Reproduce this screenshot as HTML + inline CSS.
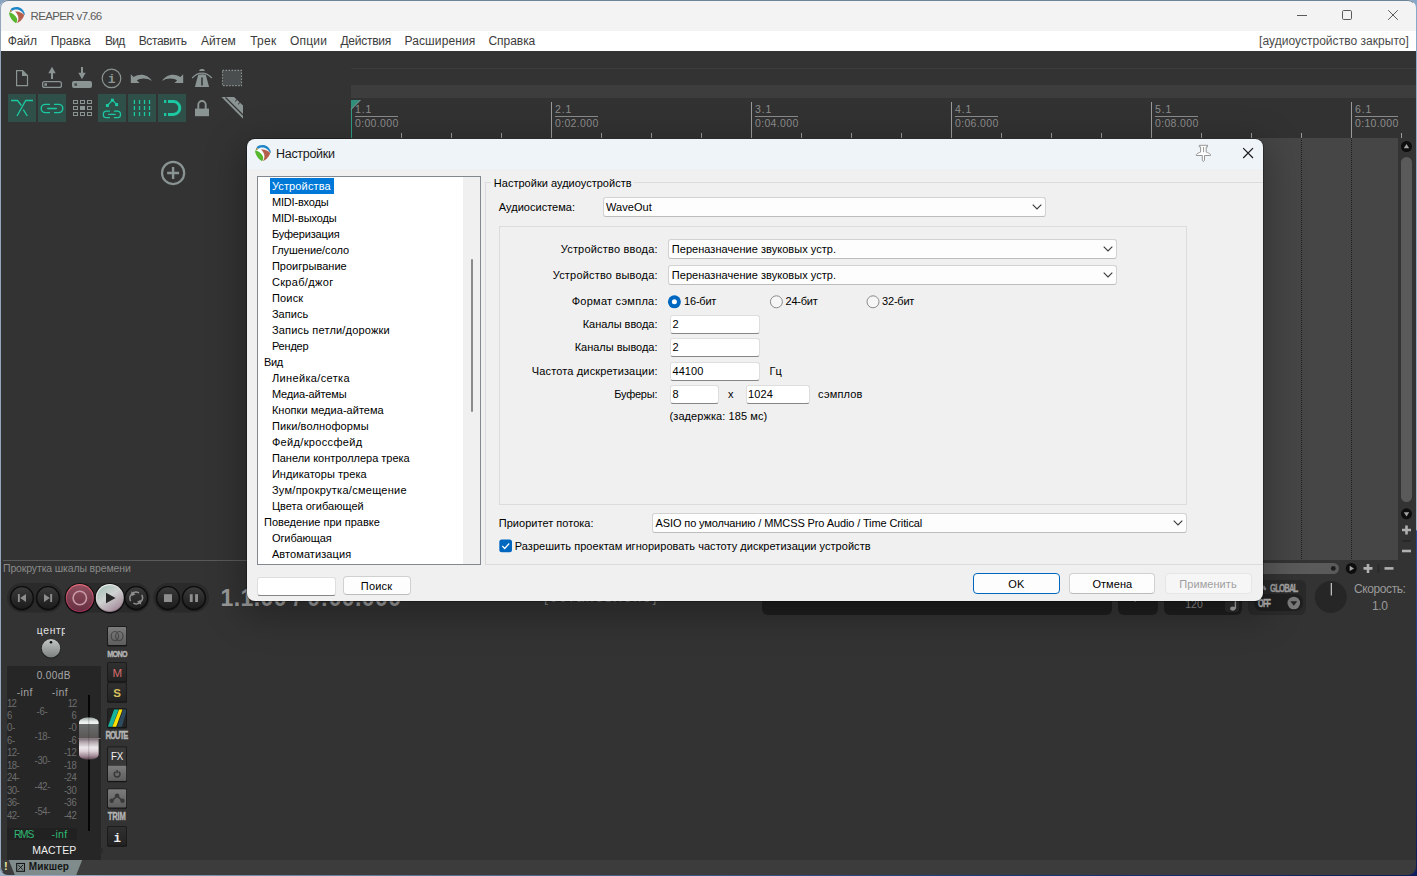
<!DOCTYPE html>
<html lang="ru"><head><meta charset="utf-8"><title>REAPER v7.66</title>
<style>
html,body{margin:0;padding:0;}
body{width:1417px;height:876px;overflow:hidden;position:relative;background:linear-gradient(90deg,#9fb0c4 0,#5c7290 30%,#1c3a78 75%,#0c1c58 100%);
 font-family:"Liberation Sans",sans-serif;}
.b{position:absolute;box-sizing:border-box;}
.t{position:absolute;white-space:nowrap;line-height:1;display:block;}
svg{position:absolute;overflow:visible;}
#win{position:absolute;left:0;top:0;width:1416px;height:876px;border-radius:8px;overflow:hidden;
 background:#333333;border:1px solid #6c8197;box-sizing:border-box;}
#dlg{position:absolute;left:247px;top:139px;width:1016px;height:461.5px;border-radius:8px;
 background:#f0f0f0;overflow:hidden;}
#dlgsh{position:absolute;left:247px;top:139px;width:1016px;height:461.5px;border-radius:8px;
 box-shadow:0 10px 36px 6px rgba(0,0,0,.27),0 0 0 1px rgba(0,0,0,.3);}
.edit{background:#fff;border:1px solid #dedede;border-bottom:1px solid #868686;border-radius:3px;}
.combo{background:#fdfdfd;border:1px solid #d2d2d2;border-bottom-color:#bdbdbd;border-radius:3px;}
.btn{background:#fdfdfd;border:1px solid #d0d0d0;border-bottom-color:#bcbcbc;border-radius:4px;}
.grp{border:1px solid #dcdcdc;}
#frame{position:absolute;left:0;top:0;width:1416px;height:875px;box-sizing:border-box;border-radius:8px;
 border:1px solid rgba(70,95,125,.0);border-top-color:#6e8499;border-left-color:#93a6ba;
 pointer-events:none;}

</style></head>
<body>
<div class="b " style="left:0px;top:0px;width:1416px;height:875px;background:#333333;"></div><div class="b " style="left:0px;top:0px;width:1416px;height:31px;background:#f3f3f3;"></div><div class="b " style="left:0px;top:31px;width:1416px;height:20px;background:#ffffff;"></div><svg style="left:9px;top:6.8px" width="16.4" height="16.4" viewBox="0 -0.400 16.400 16.400"><path d="M1.500 1.900C3.500-.3 7-1 9.800-.1 13 .9 15.400 3.800 16.100 7.700l-1.300-.9C13.600 4.800 11.800 3 9.300 2.400 7 1.900 4.800 2.300 3.300 3.400z" fill="#1e86c8"/><path d="M2.300 3.800C4.600 3.200 6.600 4.600 8 6.800c1.400 2.400 1.800 5.800-.1 9H7L.8 4.900z" fill="#ffffff"/><path d="M.1 4.900C2.500 5.200 6.300 7.600 7.800 10.800c.8 1.800.4 3.800-.8 5C3.200 13.600 0 9.400.1 4.900z" fill="#57b82f"/><path d="M6 4.200c3-.6 7 .8 9.200 3.400-.8 3.400-3.800 6.800-7.300 8.200 1.500-2.200 1.900-4.400 1.300-6.600C8.600 7.200 7.400 5.400 6 4.200z" fill="#b5604c"/><path d="M1.400 2.300l1.500.9-.5 1.300-1.500-.2z" fill="#8f7a2c"/></svg><span class="t" style="top:11.00px;font-size:11.5px;color:#5c5c5c;letter-spacing:-0.620px;left:30.48px;">REAPER v7.66</span><svg style="left:1290px;top:5px" width="120" height="22" viewBox="0 0 120 22" fill="none" stroke="#5a5a5a" stroke-width="1"><path d="M7 10.500h10"/><rect x="52.500" y="5.500" width="9" height="9" rx="1.200"/><path d="M98.200 5.200l9.600 9.600M107.800 5.200l-9.600 9.600"/></svg><span class="t" style="top:35.00px;font-size:12px;color:#3b3b3b;letter-spacing:-0.059px;left:7.66px;">Файл</span><span class="t" style="top:35.00px;font-size:12px;color:#3b3b3b;letter-spacing:-0.081px;left:50.66px;">Правка</span><span class="t" style="top:35.00px;font-size:12px;color:#3b3b3b;letter-spacing:-0.689px;left:104.96px;">Вид</span><span class="t" style="top:35.00px;font-size:12px;color:#3b3b3b;letter-spacing:-0.362px;left:138.66px;">Вставить</span><span class="t" style="top:35.00px;font-size:12px;color:#3b3b3b;letter-spacing:-0.040px;left:200.96px;">Айтем</span><span class="t" style="top:35.00px;font-size:12px;color:#3b3b3b;letter-spacing:0.291px;left:250.16px;">Трек</span><span class="t" style="top:35.00px;font-size:12px;color:#3b3b3b;letter-spacing:0.229px;left:289.96px;">Опции</span><span class="t" style="top:35.00px;font-size:12px;color:#3b3b3b;letter-spacing:-0.248px;left:340.46px;">Действия</span><span class="t" style="top:35.00px;font-size:12px;color:#3b3b3b;letter-spacing:0.116px;left:404.46px;">Расширения</span><span class="t" style="top:35.00px;font-size:12px;color:#3b3b3b;letter-spacing:-0.040px;left:488.46px;">Справка</span><span class="t" style="top:35.00px;font-size:12px;color:#4a4a4a;letter-spacing:0.036px;left:1259.06px;">[аудиоустройство закрыто]</span><div class="b " style="left:351px;top:68px;width:1065px;height:1px;background:#3b3b3b;"></div><div class="b " style="left:351px;top:85px;width:1065px;height:13px;background:#3d3d3d;"></div><div class="b " style="left:351px;top:98px;width:1065px;height:40px;background:#323232;"></div><span class="t" style="top:104.00px;font-size:10.5px;color:#8c8c8c;letter-spacing:0.813px;left:355.03px;">1.1</span><div class="b " style="left:355px;top:116px;width:43px;height:1px;background:#8a8a8a;"></div><span class="t" style="top:118.00px;font-size:10.5px;color:#8c8c8c;letter-spacing:0.337px;left:355.03px;">0:00.000</span><div class="b " style="left:401px;top:133px;width:1px;height:5px;background:#9a9a9a;"></div><div class="b " style="left:451px;top:133px;width:1px;height:5px;background:#9a9a9a;"></div><div class="b " style="left:501px;top:133px;width:1px;height:5px;background:#9a9a9a;"></div><div class="b " style="left:551px;top:102px;width:1px;height:36px;background:#9a9a9a;"></div><span class="t" style="top:104.00px;font-size:10.5px;color:#8c8c8c;letter-spacing:0.813px;left:555.03px;">2.1</span><div class="b " style="left:555px;top:116px;width:43px;height:1px;background:#8a8a8a;"></div><span class="t" style="top:118.00px;font-size:10.5px;color:#8c8c8c;letter-spacing:0.337px;left:555.03px;">0:02.000</span><div class="b " style="left:601px;top:133px;width:1px;height:5px;background:#9a9a9a;"></div><div class="b " style="left:651px;top:133px;width:1px;height:5px;background:#9a9a9a;"></div><div class="b " style="left:701px;top:133px;width:1px;height:5px;background:#9a9a9a;"></div><div class="b " style="left:751px;top:102px;width:1px;height:36px;background:#9a9a9a;"></div><span class="t" style="top:104.00px;font-size:10.5px;color:#8c8c8c;letter-spacing:0.813px;left:755.03px;">3.1</span><div class="b " style="left:755px;top:116px;width:43px;height:1px;background:#8a8a8a;"></div><span class="t" style="top:118.00px;font-size:10.5px;color:#8c8c8c;letter-spacing:0.337px;left:755.03px;">0:04.000</span><div class="b " style="left:801px;top:133px;width:1px;height:5px;background:#9a9a9a;"></div><div class="b " style="left:851px;top:133px;width:1px;height:5px;background:#9a9a9a;"></div><div class="b " style="left:901px;top:133px;width:1px;height:5px;background:#9a9a9a;"></div><div class="b " style="left:951px;top:102px;width:1px;height:36px;background:#9a9a9a;"></div><span class="t" style="top:104.00px;font-size:10.5px;color:#8c8c8c;letter-spacing:0.813px;left:955.03px;">4.1</span><div class="b " style="left:955px;top:116px;width:43px;height:1px;background:#8a8a8a;"></div><span class="t" style="top:118.00px;font-size:10.5px;color:#8c8c8c;letter-spacing:0.337px;left:955.03px;">0:06.000</span><div class="b " style="left:1001px;top:133px;width:1px;height:5px;background:#9a9a9a;"></div><div class="b " style="left:1051px;top:133px;width:1px;height:5px;background:#9a9a9a;"></div><div class="b " style="left:1101px;top:133px;width:1px;height:5px;background:#9a9a9a;"></div><div class="b " style="left:1151px;top:102px;width:1px;height:36px;background:#9a9a9a;"></div><span class="t" style="top:104.00px;font-size:10.5px;color:#8c8c8c;letter-spacing:0.813px;left:1155.03px;">5.1</span><div class="b " style="left:1155px;top:116px;width:43px;height:1px;background:#8a8a8a;"></div><span class="t" style="top:118.00px;font-size:10.5px;color:#8c8c8c;letter-spacing:0.337px;left:1155.03px;">0:08.000</span><div class="b " style="left:1201px;top:133px;width:1px;height:5px;background:#9a9a9a;"></div><div class="b " style="left:1251px;top:133px;width:1px;height:5px;background:#9a9a9a;"></div><div class="b " style="left:1301px;top:133px;width:1px;height:5px;background:#9a9a9a;"></div><div class="b " style="left:1351px;top:102px;width:1px;height:36px;background:#9a9a9a;"></div><span class="t" style="top:104.00px;font-size:10.5px;color:#8c8c8c;letter-spacing:0.813px;left:1355.03px;">6.1</span><div class="b " style="left:1355px;top:116px;width:43px;height:1px;background:#8a8a8a;"></div><span class="t" style="top:118.00px;font-size:10.5px;color:#8c8c8c;letter-spacing:0.337px;left:1355.03px;">0:10.000</span><div class="b " style="left:1401px;top:133px;width:1px;height:5px;background:#9a9a9a;"></div><div class="b " style="left:351px;top:100px;width:1px;height:38px;background:#2f9c86;"></div><svg style="left:351px;top:100px" width="10" height="10" viewBox="0 0 10 10"><path d="M0 0h9.500L0 9.500z" fill="#2f8f7a"/><path d="M9.500 0L0 9.500" stroke="#8d9a97" stroke-width="1"/></svg><div class="b " style="left:351px;top:138px;width:1047px;height:422px;background:#464646;"></div><div class="b" style="left:1301px;top:138px;width:1px;height:422px;background:repeating-linear-gradient(#1f1f1f 0 1px,transparent 1px 2px)"></div><div class="b" style="left:1351px;top:138px;width:1px;height:422px;background:repeating-linear-gradient(#1f1f1f 0 1px,transparent 1px 2px)"></div><div class="b " style="left:1398px;top:138px;width:18px;height:440px;background:#333333;"></div><div class="b " style="left:1401px;top:157px;width:11px;height:345px;background:#5a5a5a;border-radius:5.500px;"></div><svg style="left:1398px;top:138px" width="18" height="430" viewBox="0 0 18 430"><circle cx="8.500" cy="8.500" r="5.500" fill="#0d0d0d"/><path d="M5.800 10.300h5.400L8.500 6z" fill="#a4a4a4"/><circle cx="8.500" cy="375.800" r="5.500" fill="#0d0d0d"/><path d="M5.800 374.200h5.400L8.500 378.500z" fill="#a4a4a4"/><path d="M4 392h9M8.500 387.500v9" stroke="#b0b0b0" stroke-width="2.600"/><path d="M4.500 403h8" stroke="#282828" stroke-width="1.800"/><path d="M4 413h9" stroke="#b0b0b0" stroke-width="2.600"/></svg><div class="b " style="left:351px;top:560px;width:1047px;height:18px;background:#333333;"></div><div class="b " style="left:360px;top:563px;width:979px;height:11px;background:#5a5a5a;border-radius:5.500px;"></div><svg style="left:1320px;top:560px" width="80" height="18" viewBox="0 0 80 18"><circle cx="13.300" cy="8.400" r="2.400" fill="#1c1c1c"/><circle cx="31.300" cy="8.400" r="5.500" fill="#0d0d0d"/><path d="M29.700 5.700v5.400L34 8.400z" fill="#a4a4a4"/><path d="M43.500 8.400h9M48 3.900v9" stroke="#b0b0b0" stroke-width="2.600"/><path d="M58.500 4.500v8" stroke="#282828" stroke-width="1.800"/><path d="M64.500 8.400h9" stroke="#b0b0b0" stroke-width="2.600"/></svg><svg style="left:160px;top:160px" width="26" height="26" viewBox="0 0 26 26" fill="none" stroke="#8a9393"><circle cx="13.100" cy="12.950" r="11.100" stroke-width="2.200"/><path d="M7.100 12.950h12M13.100 6.950v12" stroke-width="2.400"/></svg><div class="b " style="left:8px;top:94px;width:28px;height:28px;background:#2e5048;"></div><div class="b " style="left:38px;top:94px;width:28px;height:28px;background:#2e5048;"></div><div class="b " style="left:98px;top:94px;width:28px;height:28px;background:#2e5048;"></div><div class="b " style="left:128px;top:94px;width:28px;height:28px;background:#2e5048;"></div><div class="b " style="left:158px;top:94px;width:28px;height:28px;background:#2e5048;"></div><svg style="left:0px;top:60px" width="250" height="66" viewBox="0 60 250 66"><path d="M16.600 70.600h6l4.900 4.900v10.100h-10.900z" fill="none" stroke="#8a9492" stroke-width="1.200"/><path d="M22 70.200l5.900 5.900h-5.900z" fill="#8a9492"/><path d="M52 66.800l3.700 6.500h-2.700v5.700h-2v-5.700h-2.700z" fill="#8a9492"/><rect x="42.600" y="81.600" width="18.800" height="5.800" rx="2" fill="none" stroke="#8a9492" stroke-width="1.300"/><rect x="44.400" y="83.300" width="2.600" height="2.500" fill="#8a9492"/><path d="M81 67h2v5.800h2.700L82 79.300l-3.700-6.500H81z" fill="#8a9492"/><rect x="72" y="81" width="20" height="7" rx="2" fill="#8a9492"/><rect x="74.400" y="83.300" width="2.600" height="2.500" fill="#454a49"/><circle cx="111.500" cy="78.400" r="9.300" fill="none" stroke="#8a9492" stroke-width="1.200"/><text x="111.700" y="83.200" font-family="Liberation Mono,monospace" font-weight="700" font-size="13" text-anchor="middle" fill="#8a9492">i</text><path d="M130.800 74.300v8.700h8.800l-2.700-2.600c3.800-2.600 9.700-2.700 14.900.5-2.800-5-10.600-8.600-18.200-3.900z" fill="#8a9492"/><path d="M183.200 74.300v8.700h-8.800l2.700-2.600c-3.800-2.600-9.700-2.700-14.900.5 2.800-5 10.600-8.600 18.200-3.900z" fill="#8a9492"/><path d="M199.600 69.700c.6-1.100 4.200-1.100 4.800 0l.4 1.300h-5.600z" fill="#8a9492"/><path d="M192.200 78c5.600-6.600 14-6.600 19.600 0" fill="none" stroke="#8a9492" stroke-width="1.200"/><path d="M198.200 74.800c2.400-.8 5.200-.8 7.600 0l3.300 12.200h-14.200z" fill="#8a9492"/><path d="M201.300 77.500h1.400v8h-1.400z" fill="#2a2a2a"/><rect x="222.500" y="70.400" width="19" height="15.200" fill="#4a4e4e" stroke="#8a9492" stroke-width="1.100" stroke-dasharray="1.600 1.400"/><path d="M11 100.500h6.600l3.700 5M23.300 109.600l4 6.400M33 100.500h-7.300l-8.700 15.500" fill="none" stroke="#1cc8a2" stroke-width="1.300"/><path d="M50.0 104.4H45.3a4.1 4.1 0 0 0 0 8.2H50.0M54.0 104.4H58.7a4.1 4.1 0 0 1 0 8.2H54.0M47.2 108.5H56.8" fill="none" stroke="#1cc8a2" stroke-width="1.4"/><rect x="73.5" y="100.5" width="4" height="3" fill="none" stroke="#8a9492" stroke-width="1"/><rect x="80.5" y="100.5" width="4" height="3" fill="none" stroke="#8a9492" stroke-width="1"/><rect x="87.5" y="100.5" width="4" height="3" fill="none" stroke="#8a9492" stroke-width="1"/><rect x="73.5" y="106.5" width="4" height="3" fill="none" stroke="#8a9492" stroke-width="1"/><rect x="80.0" y="106.0" width="5" height="4" fill="#8a9492"/><rect x="87.5" y="106.5" width="4" height="3" fill="none" stroke="#8a9492" stroke-width="1"/><rect x="73.5" y="112.5" width="4" height="3" fill="none" stroke="#8a9492" stroke-width="1"/><rect x="80.5" y="112.5" width="4" height="3" fill="none" stroke="#8a9492" stroke-width="1"/><rect x="87.5" y="112.5" width="4" height="3" fill="none" stroke="#8a9492" stroke-width="1"/><path d="M107.500 105.500l5-5.300 4.200 4.500" fill="none" stroke="#1cc8a2" stroke-width="1.200"/><rect x="110.900" y="98.700" width="3" height="3" fill="#1cc8a2"/><rect x="105.900" y="104" width="3" height="3" fill="#1cc8a2"/><rect x="115.100" y="103.100" width="3" height="3" fill="#1cc8a2"/><path d="M109.9 111.2H106.5a3.2 3.2 0 0 0 0 6.4H109.9M113.9 111.2H117.3a3.2 3.2 0 0 1 0 6.4H113.9M108.1 114.4H115.7" fill="none" stroke="#1cc8a2" stroke-width="1.3"/><path d="M134.4 100v4M134.4 106v4M134.4 112v4" stroke="#1cc8a2" stroke-width="1.300"/><path d="M139.5 100v4M139.5 106v4M139.5 112v4" stroke="#1cc8a2" stroke-width="1.300"/><path d="M144.5 100v4M144.5 106v4M144.5 112v4" stroke="#1cc8a2" stroke-width="1.300"/><path d="M149.5 100v4M149.5 106v4M149.5 112v4" stroke="#1cc8a2" stroke-width="1.300"/><rect x="164" y="100" width="2.300" height="3" fill="#1cc8a2"/><rect x="164" y="113" width="2.300" height="3" fill="#1cc8a2"/><path d="M168 101.600h5.400a6.400 6.400 0 0 1 0 12.800H168" fill="none" stroke="#1cc8a2" stroke-width="3"/><rect x="195" y="108.600" width="14" height="7.600" fill="#8a9492"/><path d="M198.300 109v-4.300a3.700 3.700 0 0 1 7.400 0v4.300" fill="none" stroke="#8a9492" stroke-width="1.900"/><path d="M221.500 97h12.500l9 8.500v13.300z" fill="#8a9492"/><path d="M225.500 97.500l17.500 17.500" stroke="#333" stroke-width="1.100"/><path d="M235 101.500l3-2.800M238 104.300l2.600-2.400" stroke="#333" stroke-width="1"/></svg><div class="b " style="left:3px;top:560px;width:348px;height:1px;background:#5a5a5a;"></div><span class="t" style="top:563.00px;font-size:10.5px;color:#8a8a8a;letter-spacing:-0.141px;left:3.03px;">Прокрутка шкалы времени</span><svg style="left:0px;top:578px" width="420" height="44" viewBox="0 578 420 44"><defs><linearGradient id="gdk" x1="0" y1="0" x2="0" y2="1"><stop offset="0" stop-color="#3a3a3a"/><stop offset="1" stop-color="#1c1c1c"/></linearGradient><linearGradient id="grec" x1="0" y1="0" x2="0" y2="1"><stop offset="0" stop-color="#e86c7c"/><stop offset=".5" stop-color="#b84c66"/><stop offset="1" stop-color="#a02a5c"/></linearGradient><linearGradient id="gplay" x1="0.15" y1="0" x2="0.85" y2="1"><stop offset="0" stop-color="#a4c0b6"/><stop offset=".45" stop-color="#d0d2d1"/><stop offset="1" stop-color="#a08494"/></linearGradient><linearGradient id="grecf" x1="0" y1="0" x2="0" y2="1"><stop offset="0" stop-color="#905060"/><stop offset="1" stop-color="#683040"/></linearGradient><linearGradient id="gplayr" x1="0.3" y1="0" x2="0.7" y2="1"><stop offset="0" stop-color="#f4f6f5"/><stop offset=".5" stop-color="#c8c8c8"/><stop offset="1" stop-color="#846878"/></linearGradient></defs><rect x="7" y="583" width="55.5" height="29.500" rx="14.700" fill="#2a2a2a"/><rect x="64.5" y="583" width="85.5" height="29.500" rx="14.700" fill="#2a2a2a"/><rect x="153.3" y="583" width="55.69999999999999" height="29.500" rx="14.700" fill="#2a2a2a"/><circle cx="21.9" cy="598.6" r="12.4" fill="#1a1a1a"/><circle cx="21.9" cy="598" r="11.9" fill="#0c0c0c"/><circle cx="21.9" cy="598" r="10.700000000000001" fill="url(#gdk)"/><path d="M17.900 594.100h1.900v7.900h-1.900zM26 594.100v7.900l-5.800-3.950z" fill="#8e8e8e"/><circle cx="48" cy="598.6" r="12.4" fill="#1a1a1a"/><circle cx="48" cy="598" r="11.9" fill="#0c0c0c"/><circle cx="48" cy="598" r="10.700000000000001" fill="url(#gdk)"/><path d="M50.200 594.100h1.900v7.900h-1.900zM44 594.100v7.900l5.800-3.950z" fill="#8e8e8e"/><circle cx="136.2" cy="598.6" r="12.4" fill="#1a1a1a"/><circle cx="136.2" cy="598" r="11.9" fill="#0c0c0c"/><circle cx="136.2" cy="598" r="10.700000000000001" fill="url(#gdk)"/><path d="M130.600 601.200a6.200 6.200 0 0 1 8.400-8.300M141.800 594.800a6.200 6.200 0 0 1-8.400 8.300" fill="none" stroke="#8e8e8e" stroke-width="1.500"/><path d="M131.200 591.200l4.300 3.100-3.900 2zM141.200 604.800l-4.300-3.100 3.900-2z" fill="#8e8e8e"/><circle cx="168" cy="598.6" r="12.4" fill="#1a1a1a"/><circle cx="168" cy="598" r="11.9" fill="#0c0c0c"/><circle cx="168" cy="598" r="10.700000000000001" fill="url(#gdk)"/><rect x="164" y="594.200" width="8" height="7.800" fill="#8e8e8e"/><circle cx="193.9" cy="598.6" r="12.4" fill="#1a1a1a"/><circle cx="193.9" cy="598" r="11.9" fill="#0c0c0c"/><circle cx="193.9" cy="598" r="10.700000000000001" fill="url(#gdk)"/><rect x="189.800" y="594.200" width="2.900" height="7.800" fill="#8e8e8e"/><rect x="195.100" y="594.200" width="2.900" height="7.800" fill="#8e8e8e"/><circle cx="79.800" cy="598.300" r="15.100" fill="#0a0a0a"/><circle cx="79.800" cy="598" r="14" fill="url(#grec)"/><circle cx="79.800" cy="598.100" r="12.900" fill="url(#grecf)"/><circle cx="79.800" cy="598" r="6.700" fill="none" stroke="#c89aa8" stroke-width="1.600"/><circle cx="109.800" cy="598.300" r="15.100" fill="#0a0a0a"/><circle cx="109.800" cy="598" r="14" fill="url(#gplayr)"/><circle cx="109.800" cy="598.100" r="12.900" fill="url(#gplay)"/><path d="M106 592.800v10.400l9.600-5.200z" fill="#262626"/></svg><span class="t" style="top:587.00px;font-size:23px;color:#9a9a9a;font-weight:700;letter-spacing:0.418px;left:220.47px;">1.1.00 / 0:00.000</span><span class="t" style="top:590.00px;font-size:14px;color:#808080;letter-spacing:1.813px;left:543.97px;">[остановлено]</span><div class="b " style="left:762px;top:580px;width:350px;height:35px;background:#1e1e1e;border-radius:6px;"></div><div class="b " style="left:1118px;top:580px;width:40px;height:35px;background:#1e1e1e;border-radius:6px;"></div><div class="b " style="left:1164px;top:580px;width:78px;height:35px;background:#1e1e1e;border-radius:6px;"></div><div class="b " style="left:1225px;top:588px;width:14px;height:24px;background:#2c2c2c;border-radius:3px;"></div><span class="t" style="top:599.00px;font-size:10.5px;color:#8a8a8a;letter-spacing:0.102px;left:1185.13px;">120</span><svg style="left:1226px;top:592px" width="12" height="18" viewBox="0 0 12 18"><ellipse cx="6.900" cy="16.600" rx="2.700" ry="2.100" fill="#a8a8a8"/><path d="M8.700 16.600V8h1.400v8.600z" fill="#a8a8a8"/></svg><span class="t" style="top:592.00px;font-size:12px;color:#8a8a8a;left:1133.46px;">.</span><span class="t" style="top:592.00px;font-size:11px;color:#8a8a8a;left:784.50px;">4/4</span><div class="b " style="left:1248px;top:580px;width:58px;height:35px;background:#2a2a2a;border-radius:6px;"></div><div class="b " style="left:1254px;top:594px;width:49px;height:17px;background:#1f1f1f;border-radius:8px;"></div><span class="t" style="top:583.00px;font-size:10.5px;color:#a0a0a0;font-weight:700;letter-spacing:-1.200px;left:1269.65px;transform:scaleX(0.74);transform-origin:0 0;-webkit-text-stroke:.35px #a0a0a0;">GLOBAL</span><span class="t" style="top:598.00px;font-size:10.5px;color:#b4b4b4;font-weight:700;letter-spacing:-1.200px;left:1258.17px;transform:scaleX(0.7);transform-origin:0 0;-webkit-text-stroke:.35px #b4b4b4;">OFF</span><svg style="left:1240px;top:578px" width="70" height="40" viewBox="1240 578 70 40"><circle cx="1293.800" cy="603" r="6.300" fill="#7a7a7a"/><path d="M1290.300 601.200h7l-3.500 4.600z" fill="#262626"/><path d="M1262.500 586.500c1-1.800 2.500-1 2.500.800 1.800.5 1.800 3-.2 3-1.200 0-1.800-.8-1.800-2z" fill="#8a8a8a"/></svg><svg style="left:1312px;top:578px" width="40" height="40" viewBox="1312 578 40 40"><circle cx="1330.800" cy="597" r="16" fill="#262626"/><path d="M1331.300 583v12.500" stroke="#d8d8d8" stroke-width="1.100"/></svg><span class="t" style="top:583.00px;font-size:12px;color:#9a9a9a;letter-spacing:-0.415px;left:1354.08px;">Скорость:</span><span class="t" style="top:600.00px;font-size:12px;color:#9a9a9a;letter-spacing:-0.424px;left:1372.08px;">1.0</span><div class="b " style="left:0px;top:860px;width:1416px;height:15px;background:#3c3c3c;"></div><div class="b " style="left:7px;top:666px;width:94px;height:194px;background:#262626;"></div><div class="b " style="left:100px;top:848px;width:2.5px;height:5px;background:#2a2a2a;border-radius:2px;"></div><span class="t" style="top:626.00px;font-size:10.3px;color:#e4e4e4;letter-spacing:0.645px;left:36.84px;">центр</span><div class="b " style="left:64.8px;top:624px;width:8px;height:14px;background:#333333;"></div><svg style="left:0px;top:620px" width="140" height="256" viewBox="0 620 140 256"><defs><linearGradient id="gknob" x1="0" y1="0" x2="0" y2="1"><stop offset="0" stop-color="#c4c8c6"/><stop offset="1" stop-color="#7c8280"/></linearGradient><linearGradient id="gbtn" x1="0" y1="0" x2="0" y2="1"><stop offset="0" stop-color="#7c7c7c"/><stop offset="1" stop-color="#5e5e5e"/></linearGradient><linearGradient id="gdbtn" x1="0" y1="0" x2="0" y2="1"><stop offset="0" stop-color="#303030"/><stop offset="1" stop-color="#222222"/></linearGradient><linearGradient id="gfad1" x1="0" y1="0" x2="0" y2="1"><stop offset="0" stop-color="#9aa8a2"/><stop offset=".2" stop-color="#e8ecea"/><stop offset=".3" stop-color="#f4f4f4"/><stop offset=".34" stop-color="#6a6e6c"/><stop offset="1" stop-color="#5a5656"/></linearGradient><linearGradient id="gfad2" x1="0" y1="0" x2="0" y2="1"><stop offset="0" stop-color="#80767c"/><stop offset=".15" stop-color="#b4a8ae"/><stop offset=".42" stop-color="#ece8ea"/><stop offset=".6" stop-color="#dcd0d6"/><stop offset=".85" stop-color="#9c8490"/><stop offset="1" stop-color="#5a4650"/></linearGradient></defs><circle cx="51" cy="648.800" r="9.800" fill="#1e1e1e"/><circle cx="51" cy="648.200" r="9.200" fill="url(#gknob)"/><circle cx="51" cy="642.300" r="1.300" fill="#111"/><rect x="88" y="695" width="2" height="136" fill="#050505"/><path d="M79 722.500c0-3 4-5 9.800-5s9.800 2 9.800 5v15.500h-19.600z" fill="url(#gfad1)"/><path d="M79 739h19.600v15.500c0 3-4 5-9.800 5s-9.800-2-9.800-5z" fill="url(#gfad2)"/><path d="M78.500 738.500h22" stroke="#8a7a82" stroke-width="1"/><path d="M88.800 718v41" stroke="#000" stroke-opacity=".18" stroke-width="1"/><rect x="107.200" y="626.3000000000001" width="19.800" height="20.099999999999998" rx="1.500" fill="#161616"/><rect x="108" y="627.0" width="18.200" height="18.099999999999998" rx="1" fill="url(#gbtn)"/><ellipse cx="114.900" cy="636.100" rx="3.700" ry="4.600" fill="none" stroke="#484848" stroke-width="1.200"/><ellipse cx="119.300" cy="636.100" rx="3.700" ry="4.600" fill="none" stroke="#484848" stroke-width="1.200"/><rect x="107.200" y="662.3000000000001" width="19.800" height="20.099999999999998" rx="1.500" fill="#161616"/><rect x="108" y="663.0" width="18.200" height="18.099999999999998" rx="1" fill="url(#gdbtn)"/><rect x="107.200" y="682.6" width="19.800" height="20.099999999999998" rx="1.500" fill="#161616"/><rect x="108" y="683.3" width="18.200" height="18.099999999999998" rx="1" fill="url(#gdbtn)"/><rect x="107.200" y="708.3000000000001" width="19.800" height="20.099999999999998" rx="1.500" fill="#161616"/><rect x="108" y="709.0" width="18.200" height="18.099999999999998" rx="1" fill="#242424"/><path d="M108.200 726.800v-1l5.900-16.300h4.500l-6.400 17.300z" fill="#17b39b"/><path d="M112.400 726.800l6.700-17.300h3.400l-6.300 17.300z" fill="#ffe100"/><path d="M117.200 726.800l6-17.300h2.800v3.200l-4.100 14.100z" fill="#2d4a5e"/><rect x="107.200" y="746.6" width="19.800" height="35.6" rx="1.500" fill="#161616"/><rect x="108" y="747.3" width="18.200" height="33.6" rx="1" fill="#383838"/><rect x="108" y="765.800" width="18.200" height="15" fill="url(#gbtn)"/><path d="M115.600 771.600a2.900 2.900 0 1 0 3 0" fill="none" stroke="#363636" stroke-width="1.500"/><path d="M117.100 770v3.200" stroke="#363636" stroke-width="1.500"/><rect x="107.200" y="788.6" width="19.800" height="20.099999999999998" rx="1.500" fill="#161616"/><rect x="108" y="789.3" width="18.200" height="18.099999999999998" rx="1" fill="url(#gbtn)"/><path d="M111.700 800.800l5.400-5 5.400 5" fill="none" stroke="#3a3a3a" stroke-width="1.700"/><circle cx="111.700" cy="800.800" r="2.200" fill="#3a3a3a"/><circle cx="117.100" cy="795.600" r="2.200" fill="#3a3a3a"/><circle cx="122.500" cy="800.800" r="2.200" fill="#3a3a3a"/><rect x="107.200" y="826.3000000000001" width="19.800" height="20.4" rx="1.500" fill="#161616"/><rect x="108" y="827.0" width="18.200" height="18.4" rx="1" fill="url(#gdbtn)"/><text x="117.200" y="841.600" font-family="Liberation Mono,monospace" font-weight="700" font-size="12.500" text-anchor="middle" fill="#ececec">i</text><path d="M8.800 860h73.400l-6 15h-61.400z" fill="#7f8c8b"/><rect x="16.700" y="863.500" width="7.800" height="7.800" fill="none" stroke="#161616" stroke-width="1.100"/><path d="M18.300 865.100l4.600 4.600M22.900 865.100l-4.600 4.600" stroke="#161616" stroke-width="1"/></svg><span class="t" style="top:649.00px;font-size:9.5px;color:#b4b4b4;font-weight:700;letter-spacing:-0.861px;left:103.51px;transform:scaleX(0.76);transform-origin:50% 0;-webkit-text-stroke:.35px #b4b4b4;">MONO</span><span class="t" style="top:731.00px;font-size:10px;color:#b4b4b4;font-weight:700;letter-spacing:-1.200px;left:101.90px;transform:scaleX(0.76);transform-origin:50% 0;-webkit-text-stroke:.35px #b4b4b4;">ROUTE</span><span class="t" style="top:812.00px;font-size:10px;color:#b4b4b4;font-weight:700;letter-spacing:-0.242px;left:105.14px;transform:scaleX(0.76);transform-origin:50% 0;-webkit-text-stroke:.35px #b4b4b4;">TRIM</span><span class="t" style="top:668.00px;font-size:11.5px;color:#d46c6c;left:112.40px;">M</span><span class="t" style="top:688.00px;font-size:11.5px;color:#d8c05c;font-weight:700;left:113.36px;">S</span><span class="t" style="top:751.00px;font-size:11.5px;color:#f0f0f0;letter-spacing:-0.369px;left:110.03px;transform:scaleX(0.85);transform-origin:50% 0;">FX</span><span class="t" style="top:671.00px;font-size:10px;color:#a8a8a8;letter-spacing:0.399px;left:36.65px;">0.00dB</span><span class="t" style="top:687.00px;font-size:10.5px;color:#a0a0a0;letter-spacing:0.380px;left:16.63px;">-inf</span><span class="t" style="top:687.00px;font-size:10.5px;color:#a0a0a0;letter-spacing:0.380px;left:51.83px;">-inf</span><span class="t" style="top:699.00px;font-size:10.2px;color:#6e6e6e;letter-spacing:-0.952px;left:7.37px;transform:scaleX(0.93);transform-origin:0 0;">12</span><span class="t" style="top:699.00px;font-size:10.2px;color:#6e6e6e;letter-spacing:-0.952px;right:1341.06px;transform:scaleX(0.93);transform-origin:100% 0;">12</span><span class="t" style="top:711.00px;font-size:10.2px;color:#6e6e6e;left:7.37px;transform:scaleX(0.93);transform-origin:0 0;">6</span><span class="t" style="top:711.00px;font-size:10.2px;color:#6e6e6e;right:1340.17px;transform:scaleX(0.93);transform-origin:100% 0;">6</span><span class="t" style="top:723.00px;font-size:10.2px;color:#6e6e6e;letter-spacing:-0.338px;left:7.37px;transform:scaleX(0.93);transform-origin:0 0;">0-</span><span class="t" style="top:723.00px;font-size:10.2px;color:#6e6e6e;letter-spacing:-0.338px;right:1340.49px;transform:scaleX(0.93);transform-origin:100% 0;">-0</span><span class="t" style="top:736.00px;font-size:10.2px;color:#6e6e6e;letter-spacing:-0.338px;left:7.37px;transform:scaleX(0.93);transform-origin:0 0;">6-</span><span class="t" style="top:736.00px;font-size:10.2px;color:#6e6e6e;letter-spacing:-0.338px;right:1340.49px;transform:scaleX(0.93);transform-origin:100% 0;">-6</span><span class="t" style="top:748.00px;font-size:10.2px;color:#6e6e6e;letter-spacing:-0.505px;left:7.37px;transform:scaleX(0.93);transform-origin:0 0;">12-</span><span class="t" style="top:748.00px;font-size:10.2px;color:#6e6e6e;letter-spacing:-0.505px;right:1340.64px;transform:scaleX(0.93);transform-origin:100% 0;">-12</span><span class="t" style="top:761.00px;font-size:10.2px;color:#6e6e6e;letter-spacing:-0.505px;left:7.37px;transform:scaleX(0.93);transform-origin:0 0;">18-</span><span class="t" style="top:761.00px;font-size:10.2px;color:#6e6e6e;letter-spacing:-0.505px;right:1340.64px;transform:scaleX(0.93);transform-origin:100% 0;">-18</span><span class="t" style="top:773.00px;font-size:10.2px;color:#6e6e6e;letter-spacing:-0.505px;left:7.37px;transform:scaleX(0.93);transform-origin:0 0;">24-</span><span class="t" style="top:773.00px;font-size:10.2px;color:#6e6e6e;letter-spacing:-0.505px;right:1340.64px;transform:scaleX(0.93);transform-origin:100% 0;">-24</span><span class="t" style="top:786.00px;font-size:10.2px;color:#6e6e6e;letter-spacing:-0.505px;left:7.37px;transform:scaleX(0.93);transform-origin:0 0;">30-</span><span class="t" style="top:786.00px;font-size:10.2px;color:#6e6e6e;letter-spacing:-0.505px;right:1340.64px;transform:scaleX(0.93);transform-origin:100% 0;">-30</span><span class="t" style="top:798.00px;font-size:10.2px;color:#6e6e6e;letter-spacing:-0.505px;left:7.37px;transform:scaleX(0.93);transform-origin:0 0;">36-</span><span class="t" style="top:798.00px;font-size:10.2px;color:#6e6e6e;letter-spacing:-0.505px;right:1340.64px;transform:scaleX(0.93);transform-origin:100% 0;">-36</span><span class="t" style="top:811.00px;font-size:10.2px;color:#6e6e6e;letter-spacing:-0.505px;left:7.37px;transform:scaleX(0.93);transform-origin:0 0;">42-</span><span class="t" style="top:811.00px;font-size:10.2px;color:#6e6e6e;letter-spacing:-0.505px;right:1340.64px;transform:scaleX(0.93);transform-origin:100% 0;">-42</span><span class="t" style="top:707.00px;font-size:10.2px;color:#6e6e6e;letter-spacing:-0.198px;left:36.17px;transform:scaleX(0.93);transform-origin:50% 0;">-6-</span><span class="t" style="top:732.00px;font-size:10.2px;color:#6e6e6e;letter-spacing:-0.356px;left:33.67px;transform:scaleX(0.93);transform-origin:50% 0;">-18-</span><span class="t" style="top:756.00px;font-size:10.2px;color:#6e6e6e;letter-spacing:-0.356px;left:33.67px;transform:scaleX(0.93);transform-origin:50% 0;">-30-</span><span class="t" style="top:782.00px;font-size:10.2px;color:#6e6e6e;letter-spacing:-0.356px;left:33.67px;transform:scaleX(0.93);transform-origin:50% 0;">-42-</span><span class="t" style="top:807.00px;font-size:10.2px;color:#6e6e6e;letter-spacing:-0.356px;left:33.67px;transform:scaleX(0.93);transform-origin:50% 0;">-54-</span><div class="b " style="left:7px;top:828px;width:70px;height:12px;background:#212121;"></div><span class="t" style="top:830.00px;font-size:10.2px;color:#2eb872;letter-spacing:-1.200px;left:13.94px;">RMS</span><span class="t" style="top:829.00px;font-size:10.5px;color:#2eb872;letter-spacing:0.380px;left:51.53px;">-inf</span><span class="t" style="top:845.00px;font-size:10.5px;color:#f0f0f0;letter-spacing:0.209px;left:32.13px;">МАСТЕР</span><span class="t" style="top:861.00px;font-size:11px;color:#e8e8a0;font-weight:700;left:4.10px;">!</span><span class="t" style="top:862.00px;font-size:10px;color:#141414;font-weight:700;letter-spacing:0.140px;left:28.75px;">Микшер</span><div id="dlgsh"></div><div id="dlg" style="background:linear-gradient(#eff4f9 0,#eff4f9 30px,#f0f0f0 30px)"></div><svg style="left:254.8px;top:144.8px" width="16.4" height="16.4" viewBox="0 -0.400 16.400 16.400"><path d="M1.500 1.900C3.500-.3 7-1 9.800-.1 13 .9 15.400 3.800 16.100 7.700l-1.300-.9C13.600 4.800 11.800 3 9.300 2.400 7 1.900 4.800 2.300 3.300 3.400z" fill="#1e86c8"/><path d="M2.300 3.800C4.600 3.200 6.600 4.600 8 6.800c1.400 2.400 1.800 5.800-.1 9H7L.8 4.900z" fill="#ffffff"/><path d="M.1 4.900C2.500 5.200 6.300 7.600 7.800 10.800c.8 1.800.4 3.800-.8 5C3.200 13.600 0 9.400.1 4.900z" fill="#57b82f"/><path d="M6 4.200c3-.6 7 .8 9.200 3.400-.8 3.400-3.800 6.800-7.300 8.200 1.500-2.200 1.900-4.400 1.300-6.600C8.600 7.200 7.400 5.400 6 4.200z" fill="#b5604c"/><path d="M1.400 2.300l1.500.9-.5 1.300-1.500-.2z" fill="#8f7a2c"/></svg><span class="t" style="top:148.00px;font-size:12.5px;color:#1a1a1a;letter-spacing:-0.303px;left:276.04px;">Настройки</span><svg style="left:1190px;top:140px" width="70" height="26" viewBox="1190 140 70 26"><path d="M1199.300 145.300h8.200v1.600h-1.300v5.200c1.700.6 3.600 1.500 4.300 2.500v.9h-6v4.700l-1.100 1.400-1.100-1.400v-4.700h-6v-.9c.7-1 2.600-1.900 4.300-2.500v-5.200h-1.300z" fill="#ffffff" stroke="#8a8a8a" stroke-width=".9"/><path d="M1203.600 147v5.200" stroke="#8a8a8a" stroke-width=".9"/><path d="M1243.200 148.200l9.800 9.800M1253 148.200l-9.800 9.800" stroke="#1a1a1a" stroke-width="1.200"/></svg><div class="b " style="left:257px;top:176px;width:224px;height:389px;background:#ffffff;border:1px solid #828790;"></div><div class="b " style="left:463px;top:177px;width:17px;height:387px;background:#f0f0f0;"></div><div class="b " style="left:470.5px;top:259px;width:2px;height:153px;background:#8a8a8a;border-radius:1px;"></div><div class="b " style="left:270px;top:178px;width:64px;height:16px;background:#0078d7;"></div><span class="t" style="top:181.00px;font-size:11px;color:#ffffff;letter-spacing:0.136px;left:271.90px;">Устройства</span><span class="t" style="top:197.00px;font-size:11px;color:#000000;letter-spacing:-0.171px;left:271.90px;">MIDI-входы</span><span class="t" style="top:213.00px;font-size:11px;color:#000000;letter-spacing:-0.145px;left:271.90px;">MIDI-выходы</span><span class="t" style="top:229.00px;font-size:11px;color:#000000;letter-spacing:-0.159px;left:271.90px;">Буферизация</span><span class="t" style="top:245.00px;font-size:11px;color:#000000;letter-spacing:-0.041px;left:271.90px;">Глушение/соло</span><span class="t" style="top:261.00px;font-size:11px;color:#000000;letter-spacing:0.025px;left:271.90px;">Проигрывание</span><span class="t" style="top:277.00px;font-size:11px;color:#000000;letter-spacing:0.334px;left:271.90px;">Скраб/джог</span><span class="t" style="top:293.00px;font-size:11px;color:#000000;letter-spacing:0.196px;left:271.90px;">Поиск</span><span class="t" style="top:309.00px;font-size:11px;color:#000000;letter-spacing:0.035px;left:271.90px;">Запись</span><span class="t" style="top:325.00px;font-size:11px;color:#000000;letter-spacing:0.185px;left:271.90px;">Запись петли/дорожки</span><span class="t" style="top:341.00px;font-size:11px;color:#000000;letter-spacing:-0.187px;left:271.90px;">Рендер</span><span class="t" style="top:357.00px;font-size:11px;color:#000000;letter-spacing:-0.318px;left:264.00px;">Вид</span><span class="t" style="top:373.00px;font-size:11px;color:#000000;letter-spacing:0.365px;left:271.90px;">Линейка/сетка</span><span class="t" style="top:389.00px;font-size:11px;color:#000000;letter-spacing:-0.137px;left:271.90px;">Медиа-айтемы</span><span class="t" style="top:405.00px;font-size:11px;color:#000000;letter-spacing:0.025px;left:271.90px;">Кнопки медиа-айтема</span><span class="t" style="top:421.00px;font-size:11px;color:#000000;letter-spacing:0.124px;left:271.90px;">Пики/волноформы</span><span class="t" style="top:437.00px;font-size:11px;color:#000000;letter-spacing:0.337px;left:271.90px;">Фейд/кроссфейд</span><span class="t" style="top:453.00px;font-size:11px;color:#000000;letter-spacing:-0.024px;left:271.90px;">Панели контроллера трека</span><span class="t" style="top:469.00px;font-size:11px;color:#000000;letter-spacing:0.048px;left:271.90px;">Индикаторы трека</span><span class="t" style="top:485.00px;font-size:11px;color:#000000;letter-spacing:0.276px;left:271.90px;">Зум/прокрутка/смещение</span><span class="t" style="top:501.00px;font-size:11px;color:#000000;letter-spacing:0.014px;left:271.90px;">Цвета огибающей</span><span class="t" style="top:517.00px;font-size:11px;color:#000000;letter-spacing:-0.008px;left:264.00px;">Поведение при правке</span><span class="t" style="top:533.00px;font-size:11px;color:#000000;letter-spacing:-0.062px;left:271.90px;">Огибающая</span><span class="t" style="top:549.00px;font-size:11px;color:#000000;letter-spacing:0.093px;left:271.90px;">Автоматизация</span><div class="b edit" style="left:257px;top:577px;width:79px;height:18.5px;"></div><div class="b btn" style="left:342.5px;top:575.5px;width:68px;height:19.5px;"></div><span class="t" style="top:581.00px;font-size:11px;color:#000;letter-spacing:0.196px;left:360.87px;">Поиск</span><div class="b " style="left:485px;top:182px;width:778px;height:1px;background:#dcdcdc;"></div><div class="b " style="left:485px;top:182px;width:1px;height:383px;background:#dcdcdc;"></div><div class="b " style="left:485px;top:564px;width:778px;height:1px;background:#dcdcdc;"></div><div class="b " style="left:491px;top:177px;width:143px;height:12px;background:#f0f0f0;"></div><span class="t" style="top:178.00px;font-size:11px;color:#000;letter-spacing:0.018px;left:493.81px;">Настройки аудиоустройств</span><span class="t" style="top:202.00px;font-size:11px;color:#000;letter-spacing:0.026px;left:498.81px;">Аудиосистема:</span><div class="b combo" style="left:603px;top:196.5px;width:443px;height:20.5px;"></div><span class="t" style="top:202.00px;font-size:11px;color:#000;letter-spacing:0.053px;left:606.00px;">WaveOut</span><div class="b grp" style="left:499px;top:226px;width:688px;height:279px;"></div><svg style="left:1032px;top:204px" width="10" height="6" viewBox="0 0 10 6"><path d="M.7.700l4.300 4.300 4.300-4.300" fill="none" stroke="#3a3a3a" stroke-width="1.100"/></svg><span class="t" style="top:244.00px;font-size:11px;color:#000;letter-spacing:0.196px;right:759.31px;">Устройство ввода:</span><div class="b combo" style="left:668px;top:238.5px;width:449px;height:20.3px;"></div><span class="t" style="top:244.00px;font-size:11px;color:#000;letter-spacing:0.039px;left:671.80px;">Переназначение звуковых устр.</span><svg style="left:1103px;top:246.2px" width="10" height="6" viewBox="0 0 10 6"><path d="M.7.700l4.300 4.300 4.300-4.300" fill="none" stroke="#3a3a3a" stroke-width="1.100"/></svg><span class="t" style="top:270.00px;font-size:11px;color:#000;letter-spacing:0.190px;right:759.32px;">Устройство вывода:</span><div class="b combo" style="left:668px;top:264.5px;width:449px;height:20.3px;"></div><span class="t" style="top:270.00px;font-size:11px;color:#000;letter-spacing:0.039px;left:671.80px;">Переназначение звуковых устр.</span><svg style="left:1103px;top:272.2px" width="10" height="6" viewBox="0 0 10 6"><path d="M.7.700l4.300 4.300 4.300-4.300" fill="none" stroke="#3a3a3a" stroke-width="1.100"/></svg><span class="t" style="top:296.00px;font-size:11px;color:#000;letter-spacing:0.253px;right:759.25px;">Формат сэмпла:</span><svg style="left:666px;top:294px" width="220" height="16" viewBox="666 294 220 16"><circle cx="674.400" cy="301.800" r="6.500" fill="#0067c0"/><circle cx="674.400" cy="301.800" r="2.500" fill="#ffffff"/><circle cx="776.400" cy="301.800" r="6" fill="#f6f6f6" stroke="#8a8a8a" stroke-width="1"/><circle cx="873" cy="301.800" r="6" fill="#f6f6f6" stroke="#8a8a8a" stroke-width="1"/></svg><span class="t" style="top:296.00px;font-size:11px;color:#000;letter-spacing:-0.224px;left:684.11px;">16-бит</span><span class="t" style="top:296.00px;font-size:11px;color:#000;letter-spacing:-0.224px;left:785.50px;">24-бит</span><span class="t" style="top:296.00px;font-size:11px;color:#000;letter-spacing:-0.224px;left:882.11px;">32-бит</span><span class="t" style="top:319.00px;font-size:11px;color:#000;letter-spacing:-0.031px;right:759.54px;">Каналы ввода:</span><div class="b edit" style="left:669.7px;top:315px;width:90.5px;height:18.5px;"></div><span class="t" style="top:319.00px;font-size:11px;color:#000;left:672.50px;">2</span><span class="t" style="top:342.00px;font-size:11px;color:#000;letter-spacing:-0.021px;right:759.53px;">Каналы вывода:</span><div class="b edit" style="left:669.7px;top:338.2px;width:90.5px;height:18.5px;"></div><span class="t" style="top:342.00px;font-size:11px;color:#000;left:672.50px;">2</span><span class="t" style="top:366.00px;font-size:11px;color:#000;letter-spacing:0.152px;right:759.35px;">Частота дискретизации:</span><div class="b edit" style="left:669.7px;top:362px;width:90.5px;height:18.5px;"></div><span class="t" style="top:366.00px;font-size:11px;color:#000;letter-spacing:0.044px;left:672.50px;">44100</span><span class="t" style="top:366.00px;font-size:11px;color:#000;letter-spacing:0.004px;left:769.50px;">Гц</span><span class="t" style="top:389.00px;font-size:11px;color:#000;letter-spacing:-0.223px;right:759.73px;">Буферы:</span><div class="b edit" style="left:669.7px;top:385.3px;width:49.5px;height:18.5px;"></div><span class="t" style="top:389.00px;font-size:11px;color:#000;left:672.50px;">8</span><span class="t" style="top:389.00px;font-size:11px;color:#000;left:728.00px;">x</span><div class="b edit" style="left:745.5px;top:385.3px;width:64.5px;height:18.5px;"></div><span class="t" style="top:389.00px;font-size:11px;color:#000;letter-spacing:0.095px;left:748.00px;">1024</span><span class="t" style="top:389.00px;font-size:11px;color:#000;letter-spacing:0.167px;left:818.11px;">сэмплов</span><span class="t" style="top:411.00px;font-size:11px;color:#000;letter-spacing:0.088px;left:669.50px;">(задержка: 185 мс)</span><span class="t" style="top:518.00px;font-size:11px;color:#000;letter-spacing:0.023px;left:498.81px;">Приоритет потока:</span><div class="b combo" style="left:652px;top:512.5px;width:535px;height:20.3px;"></div><span class="t" style="top:518.00px;font-size:11px;color:#000;letter-spacing:-0.111px;left:655.50px;">ASIO по умолчанию / MMCSS Pro Audio / Time Critical</span><svg style="left:1173px;top:520.2px" width="10" height="6" viewBox="0 0 10 6"><path d="M.7.700l4.300 4.300 4.300-4.300" fill="none" stroke="#3a3a3a" stroke-width="1.100"/></svg><svg style="left:499px;top:539px" width="14" height="14" viewBox="0 0 14 14"><rect x=".3" y=".5" width="12.700" height="12.700" rx="2.500" fill="#0067c0"/><path d="M3.300 7l2.400 2.500 4.500-5" fill="none" stroke="#ffffff" stroke-width="1.200"/></svg><span class="t" style="top:541.00px;font-size:11px;color:#000;letter-spacing:0.037px;left:514.80px;">Разрешить проектам игнорировать частоту дискретизации устройств</span><div class="b btn" style="left:973px;top:573.3px;width:87px;height:20.4px;border-color:#0067c0;"></div><span class="t" style="top:579.00px;font-size:11px;color:#000;letter-spacing:0.364px;left:1008.16px;">OK</span><div class="b btn" style="left:1069.3px;top:573.3px;width:86px;height:20.4px;"></div><span class="t" style="top:579.00px;font-size:11px;color:#000;letter-spacing:0.060px;left:1092.41px;">Отмена</span><div class="b " style="left:1165px;top:573.3px;width:86.5px;height:20.4px;background:#f6f6f6;border:1px solid #e6e6e6;border-radius:4px;"></div><span class="t" style="top:579.00px;font-size:11px;color:#a0a0a0;letter-spacing:0.053px;left:1179.37px;">Применить</span><svg style="left:0px;top:0px" width="8" height="8" viewBox="0 0 8 8"><path d="M0 0h8A8 8 0 0 0 0 8z" fill="#87a4c3"/></svg><svg style="left:1408px;top:0px" width="8" height="8" viewBox="0 0 8 8"><path d="M8 0v8A8 8 0 0 0 0 0z" fill="#87a8c8"/></svg><svg style="left:0px;top:867px" width="8" height="8" viewBox="0 0 8 8"><path d="M0 8V0A8 8 0 0 0 8 8z" fill="#9fb0c4"/></svg><svg style="left:1408px;top:867px" width="8" height="8" viewBox="0 0 8 8"><path d="M8 8H0A8 8 0 0 0 8 0z" fill="#0e2060"/></svg><div id="frame"></div><div class="b" style="left:1416px;top:0;width:1px;height:876px;background:linear-gradient(#87a8c8 0,#9fb2c6 60.5%,#2c4c9c 60.6%,#0c1c58 100%)"></div><div class="b" style="left:0px;top:875px;width:1417px;height:1px;background:linear-gradient(90deg,#9fb0c4 0,#5c7290 30%,#1c3a78 70%,#0c1c58 100%)"></div>
</body></html>
